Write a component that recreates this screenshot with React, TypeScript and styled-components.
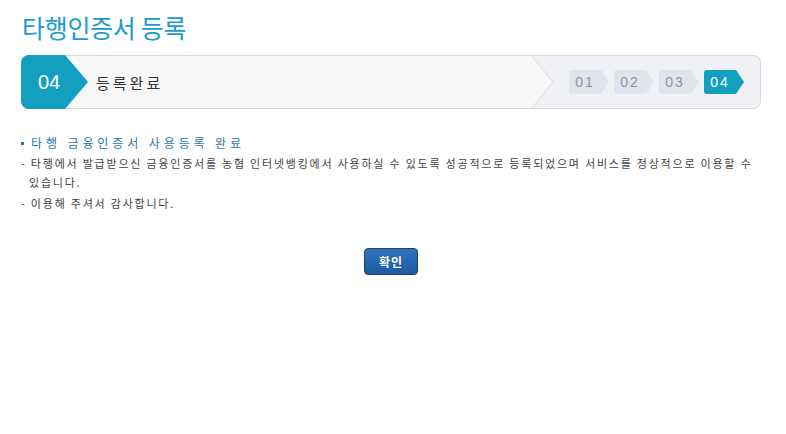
import * as React from "react";
import styled, { createGlobalStyle } from "styled-components";

const GlobalStyle = createGlobalStyle`
  html, body {
    margin: 0;
    padding: 0;
    background: #ffffff;
  }
  body {
    font-family: "Noto Sans CJK KR", "Noto Sans", sans-serif;
    color: #333;
  }
`;

const Page = styled.div`
  width: 740px;
  padding: 8px 25px 0 21px;
`;

const Title = styled.h1`
  margin: 0 0 0 1px;
  font-size: 25px;
  font-weight: 400;
  line-height: 38px;
  color: #1b9bcf;
  letter-spacing: -0.3px;
`;

const StepBar = styled.div`
  margin-top: 9px;
  display: flex;
  align-items: stretch;
  height: 52px;
  border: 1px solid #d3d8df;
  border-left: none;
  border-radius: 8px;
  background: #f7f7f8;
`;

const Badge = styled.div`
  flex: none;
  width: 67px;
  margin: -1px 0;
  display: flex;
  align-items: center;
  padding-left: 17px;
  box-sizing: border-box;
  background: #139fbf;
  border-radius: 8px 0 0 8px;
  clip-path: polygon(0 0, 44px 0, 67px 50%, 44px 100%, 0 100%);
  color: #fff;
  font-family: "Liberation Sans", Arial, sans-serif;
  font-size: 20px;
`;

const StepLabel = styled.div`
  flex: 1;
  display: flex;
  align-items: center;
  padding-left: 8px;
  font-size: 15px;
  letter-spacing: 3px;
  color: #333;
`;

const StepsArea = styled.div`
  flex: none;
  display: flex;
  align-items: center;
  background: #f0f1f4;
  border-radius: 0 8px 8px 0;
  padding-right: 16px;
`;

const Divider = styled.svg`
  display: block;
  width: 37px;
  height: 52px;
  flex: none;
`;

const Step = styled.div<{ $active?: boolean }>`
  width: 40px;
  height: 24px;
  margin-left: 5px;
  padding-right: 8px;
  box-sizing: border-box;
  display: flex;
  align-items: center;
  justify-content: center;
  border-radius: 3px;
  clip-path: polygon(0 0, 32px 0, 40px 50%, 32px 100%, 0 100%);
  background: ${(p) => (p.$active ? "#139fbf" : "#e1e4ec")};
  color: ${(p) => (p.$active ? "#ffffff" : "#8a93a5")};
  font-family: "Liberation Sans", Arial, sans-serif;
  font-size: 14px;
  letter-spacing: 2px;
  &:first-of-type {
    margin-left: 0;
  }
`;

const Content = styled.div`
  margin-top: 26px;
`;

const Heading = styled.div`
  display: flex;
  align-items: center;
  font-size: 12px;
  line-height: 16px;
  letter-spacing: 3.9px;
  color: #1f78b4;
  &::before {
    content: "";
    width: 3px;
    height: 3px;
    margin-right: 7px;
    background: #1f6fb5;
  }
`;

const Note = styled.p`
  margin: 2px 0 0;
  padding-left: 8px;
  text-indent: -8px;
  font-size: 11px;
  line-height: 19px;
  letter-spacing: 1.78px;
  color: #444;
  &:first-of-type {
    margin-top: 3px;
  }
`;

const ButtonRow = styled.div`
  display: flex;
  justify-content: center;
  margin-top: 35px;
`;

const ConfirmButton = styled.button`
  width: 54px;
  height: 27px;
  padding: 0;
  border: 1px solid #293e5c;
  border-radius: 4px;
  background: linear-gradient(#2f74bf, #1c5a9f);
  color: #fff;
  font-family: "Noto Sans CJK KR", sans-serif;
  font-size: 12px;
  font-weight: 700;
  letter-spacing: 1px;
  cursor: pointer;
`;

const steps = ["01", "02", "03", "04"];

export default function App() {
  return (
    <>
      <GlobalStyle />
      <Page>
        <Title>타행인증서 등록</Title>
        <StepBar>
          <Badge>04</Badge>
          <StepLabel>등록완료</StepLabel>
          <StepsArea>
            <Divider viewBox="0 0 37 52">
              <polygon points="0,0 21,26 0,52" fill="#f7f7f8" />
              <polyline points="0,0 21,26 0,52" fill="none" stroke="#d6dae1" strokeWidth="1" />
            </Divider>
            {steps.map((s) => (
              <Step key={s} $active={s === "04"}>
                {s}
              </Step>
            ))}
          </StepsArea>
        </StepBar>
        <Content>
          <Heading>타행 금융인증서 사용등록 완료</Heading>
          <Note>
            - 타행에서 발급받으신 금융인증서를 농협 인터넷뱅킹에서 사용하실 수 있도록 성공적으로 등록되었으며 서비스를 정상적으로 이용할 수 있습니다.
          </Note>
          <Note>- 이용해 주셔서 감사합니다.</Note>
        </Content>
        <ButtonRow>
          <ConfirmButton>확인</ConfirmButton>
        </ButtonRow>
      </Page>
    </>
  );
}
